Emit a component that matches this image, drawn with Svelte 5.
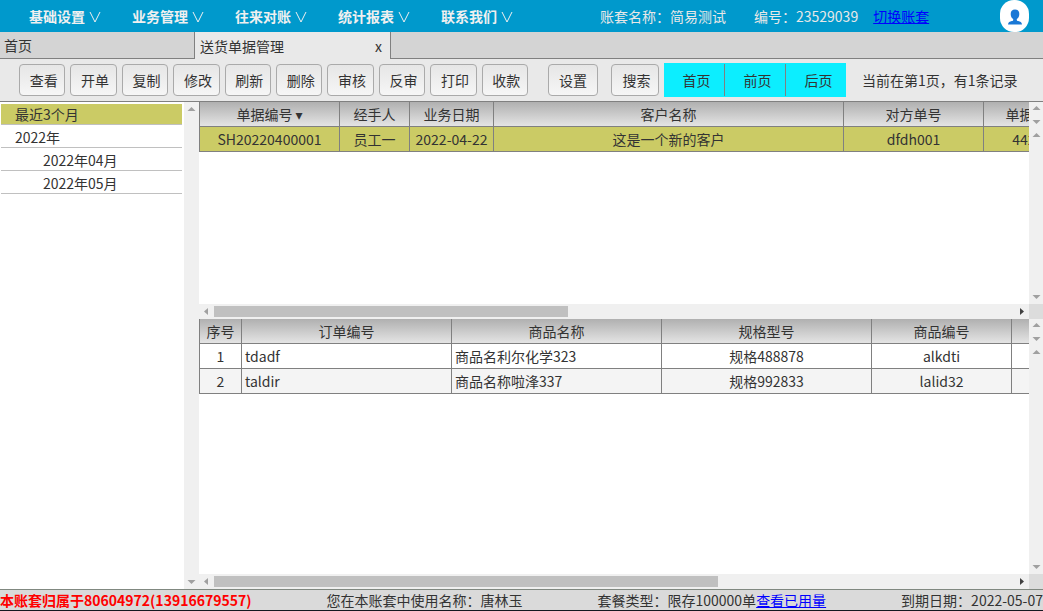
<script>
  const menus = ['基础设置', '业务管理', '往来对账', '统计报表', '联系我们'];
  const actions = ['查看', '开单', '复制', '修改', '刷新', '删除', '审核', '反审', '打印', '收款'];
  const pagers = ['首页', '前页', '后页'];
  const periods = [
    { label: '最近3个月', level: 0 },
    { label: '2022年', level: 0 },
    { label: '2022年04月', level: 1 },
    { label: '2022年05月', level: 1 }
  ];
  let selected = $state(0);

  const orders = {
    width: 1025,
    columns: [
      { title: '单据编号', width: 141, sorted: true },
      { title: '经手人', width: 70 },
      { title: '业务日期', width: 84 },
      { title: '客户名称', width: 350 },
      { title: '对方单号', width: 140 },
      { title: '单据金额', width: 100 },
      { title: '', width: 140 }
    ],
    rows: [['SH20220400001', '员工一', '2022-04-22', '这是一个新的客户', 'dfdh001', '442.00', '']],
    selectable: true,
    thumb: 44.25
  };
  const items = {
    width: 953,
    columns: [
      { title: '序号', width: 43 },
      { title: '订单编号', width: 210, left: true },
      { title: '商品名称', width: 210, left: true },
      { title: '规格型号', width: 210 },
      { title: '商品编号', width: 140 },
      { title: '', width: 140 }
    ],
    rows: [
      ['1', 'tdadf', '商品名利尔化学323', '规格488878', 'alkdti', ''],
      ['2', 'taldir', '商品名称啦浲337', '规格992833', 'lalid32', '']
    ],
    selectable: false,
    thumb: 63
  };
</script>

{#snippet arrow(dir)}
  <svg class="arrow {dir}" width="15" height="15" viewBox="0 0 15 15" aria-hidden="true">
    {#if dir === 'up'}<path d="M7.5 5 L11.5 9 H3.5 Z" />{/if}
    {#if dir === 'down'}<path d="M3.5 6 H11.5 L7.5 10 Z" />{/if}
    {#if dir === 'left'}<path d="M9 4 V11 L5 7.5 Z" />{/if}
    {#if dir === 'right'}<path d="M6 4 V11 L10 7.5 Z" />{/if}
  </svg>
{/snippet}

{#snippet grid(data)}
  <section class="pane">
    <div class="view">
      <table style:width="{data.width}px">
        <colgroup>
          {#each data.columns as col}<col style:width="{col.width}px" />{/each}
        </colgroup>
        <thead>
          <tr>
            {#each data.columns as col}
              <th>{col.title}{#if col.sorted}<span class="sort">▾</span>{/if}</th>
            {/each}
          </tr>
        </thead>
        <tbody>
          {#each data.rows as row}
            <tr class:picked={data.selectable}>
              {#each row as cell, i}<td class:left={data.columns[i].left}>{cell}</td>{/each}
            </tr>
          {/each}
        </tbody>
      </table>
    </div>
    <div class="side">
      <div class="vbar head">{@render arrow('up')}{@render arrow('down')}</div>
      <div class="vbar fill">{@render arrow('up')}{@render arrow('down')}</div>
    </div>
    <div class="hbar">
      {@render arrow('left')}
      <div class="track"><div class="thumb" style:width="{data.thumb}%"></div></div>
      {@render arrow('right')}
    </div>
    <div class="corner"></div>
  </section>
{/snippet}

<div class="app">
  <header>
    <nav>
      {#each menus as menu}
        <button class="menu">
          {menu}
          <svg width="12" height="12" viewBox="0 0 12 12" aria-hidden="true"><path d="M1 1 L6 11 L11 1" /></svg>
        </button>
      {/each}
    </nav>
    <div class="account">
      <span>账套名称：简易测试</span>
      <span>编号：23529039</span>
    </div>
    <a class="switch" href="#switch">切换账套</a>
    <button class="avatar" aria-label="用户">
      <svg width="16" height="16" viewBox="0 0 16 16" aria-hidden="true">
        <path d="M8 0.5 C5.2 0.5 3.7 2.3 3.7 4.9 C3.7 7.2 4.8 9.2 6.2 10.1 V11 C6.2 11.6 5.6 11.9 4.8 12.1 C2.7 12.6 1.2 13.2 1 15.5 H15 C14.8 13.2 13.3 12.6 11.2 12.1 C10.4 11.9 9.8 11.6 9.8 11 V10.1 C11.2 9.2 12.3 7.2 12.3 4.9 C12.3 2.3 10.8 0.5 8 0.5 Z" />
      </svg>
    </button>
  </header>

  <div class="tabs">
    <button class="tab">首页</button>
    <div class="tab active"><span>送货单据管理</span><button aria-label="关闭">x</button></div>
    <div class="rest"></div>
  </div>

  <div class="toolbar">
    <div class="actions">
      {#each actions as action}<button class="btn">{action}</button>{/each}
    </div>
    <button class="btn config">设置</button>
    <button class="btn search">搜索</button>
    <div class="pager">
      {#each pagers as page}<button>{page}</button>{/each}
    </div>
    <span class="status">当前在第1页，有1条记录</span>
  </div>

  <main>
    <aside>
      <ul>
        {#each periods as period, i}
          <li>
            <button class:selected={selected === i} class:child={period.level === 1} onclick={() => (selected = i)}>{period.label}</button>
          </li>
        {/each}
      </ul>
      <div class="vbar">{@render arrow('up')}{@render arrow('down')}</div>
    </aside>
    <div class="panes">
      {@render grid(orders)}
      {@render grid(items)}
    </div>
  </main>

  <footer>
    <strong>本账套归属于80604972(13916679557)</strong>
    <span>您在本账套中使用名称：唐林玉</span>
    <span>套餐类型：限存100000单<a href="#usage">查看已用量</a></span>
    <span>到期日期：2022-05-07</span>
  </footer>
</div>

<style>
  :global(body) {
    margin: 0;
  }
  .app {
    box-sizing: border-box;
    height: 100vh;
    display: flex;
    flex-direction: column;
    font: 14px/20px 'Noto Sans CJK SC', sans-serif;
    color: #333;
    background: #fff;
    border-bottom: 1px solid #14181f;
    overflow: hidden;
    white-space: nowrap;
  }
  button {
    font: inherit;
    color: inherit;
    border: 0;
    padding: 0;
    margin: 0;
    background: none;
    cursor: pointer;
  }
  a {
    color: #00f;
  }
  header {
    flex: none;
    height: 32px;
    display: flex;
    align-items: center;
    background: #09c;
    color: #fff;
    padding: 0 14px 0 29px;
  }
  nav {
    display: flex;
    gap: 31px;
  }
  .menu {
    display: flex;
    align-items: center;
    gap: 4px;
    font-weight: bold;
    color: #f0f0f0;
  }
  .menu svg {
    margin-top: 2px;
  }
  .menu path {
    fill: none;
    stroke: #f0f0f0;
    stroke-width: 1;
  }
  .account {
    display: flex;
    gap: 28px;
    margin-left: 87px;
    color: #e8e8e8;
  }
  .switch {
    margin-left: 15px;
  }
  .avatar {
    box-sizing: border-box;
    width: 29px;
    height: 32px;
    padding-top: 2px;
    margin-left: auto;
    border-radius: 14px;
    background: #fff;
    display: flex;
    align-items: center;
    justify-content: center;
  }
  .avatar path {
    fill: #1a78d6;
  }
  .tabs {
    flex: none;
    height: 27px;
    display: flex;
    background: #e9e9e9;
  }
  .tab {
    box-sizing: border-box;
    width: 195px;
    padding: 0 4px;
    text-align: left;
    background: #d4d4d4;
    border-right: 1px solid #808080;
    border-bottom: 1px solid #808080;
  }
  .tab.active {
    width: 196px;
    display: flex;
    justify-content: space-between;
    align-items: center;
    padding: 0 8px 0 5px;
    background: #e9e9e9;
    border-bottom: 0;
  }
  .rest {
    flex: 1;
    background: #d4d4d4;
    border-bottom: 1px solid #808080;
  }
  .toolbar {
    flex: none;
    box-sizing: border-box;
    height: 43px;
    display: flex;
    align-items: center;
    padding-left: 19px;
    background: #e9e9e9;
    border-bottom: 1px solid #808080;
  }
  .actions {
    display: grid;
    grid-template-columns: repeat(10, 1fr);
    gap: 5px;
    width: 509px;
  }
  .btn {
    box-sizing: border-box;
    height: 32px;
    padding: 0 0 0 3px;
    border: 1px solid #aaa;
    border-radius: 4px;
    background: linear-gradient(#e6e6e6, #f6f6f6);
  }
  .config {
    width: 50px;
    margin-left: 20px;
    padding-left: 0;
  }
  .search {
    width: 48px;
    margin: 0 5px 0 13px;
  }
  .pager {
    display: flex;
    height: 34px;
    background: #0ceeff;
  }
  .pager button {
    width: 61px;
    margin: 1px 0;
    padding-left: 5px;
    border-right: 1px solid #808080;
  }
  .pager button:last-child {
    width: 60px;
    border-right: 0;
  }
  .status {
    margin-left: 16px;
  }
  main {
    flex: 1;
    min-height: 0;
    display: flex;
  }
  aside {
    flex: none;
    width: 199px;
    display: flex;
  }
  ul {
    flex: 1;
    margin: 0;
    padding: 0 2px 0 1px;
    list-style: none;
  }
  li {
    border-bottom: 1px solid #c0c0c0;
  }
  li button {
    display: block;
    width: 100%;
    height: 22px;
    padding-left: 14px;
    border-top: 2px solid transparent;
    background-clip: padding-box;
    text-align: left;
  }
  li .child {
    padding-left: 42px;
  }
  li .selected {
    background-color: #cbcb65;
  }
  .panes {
    flex: 1;
    min-width: 0;
    display: grid;
    grid-template-rows: 217fr 270fr;
  }
  .pane {
    min-width: 0;
    min-height: 0;
    display: grid;
    grid-template-columns: minmax(0, 1fr) 14px;
    grid-template-rows: minmax(0, 1fr) 15px;
  }
  .view {
    overflow: hidden;
  }
  .side {
    display: flex;
    flex-direction: column;
  }
  .vbar {
    display: flex;
    flex-direction: column;
    justify-content: space-between;
    align-items: center;
    width: 15px;
    background: #f0f0f0;
  }
  .side .vbar {
    width: 14px;
  }
  .vbar.head {
    flex: none;
    height: 26px;
  }
  .head .arrow {
    margin: -1px 0;
  }
  .fill {
    flex: 1;
  }
  .hbar {
    display: flex;
    align-items: center;
    background: #f0f0f0;
  }
  .track {
    flex: 1;
  }
  .thumb {
    height: 11px;
    background: #c0c0c0;
  }
  .corner {
    background: #dcdcdc;
  }
  .arrow {
    flex: none;
    fill: #a0a0a0;
  }
  .arrow.right {
    fill: #404040;
  }
  table {
    table-layout: fixed;
    border-collapse: separate;
    border-spacing: 0;
  }
  th,
  td {
    box-sizing: border-box;
    height: 25px;
    padding: 0 3px;
    border-right: 1px solid #808080;
    border-bottom: 1px solid #808080;
    text-align: center;
    font-weight: normal;
    overflow: hidden;
  }
  th:first-child,
  td:first-child {
    border-left: 1px solid #808080;
  }
  th {
    background: linear-gradient(#b0b0b0, #e4e4e4);
  }
  td.left {
    text-align: left;
  }
  tbody tr:nth-child(even) td {
    background: #f4f4f4;
  }
  tbody tr.picked td {
    background: #cbcb65;
  }
  .sort {
    margin-left: 3px;
    font-family: 'DejaVu Sans', sans-serif;
    line-height: 1;
  }
  footer {
    flex: none;
    box-sizing: border-box;
    height: 21px;
    display: flex;
    justify-content: space-between;
    align-items: center;
    border-top: 1px solid #808880;
    background: #dadada;
  }
  footer strong {
    color: #f00;
  }
</style>
